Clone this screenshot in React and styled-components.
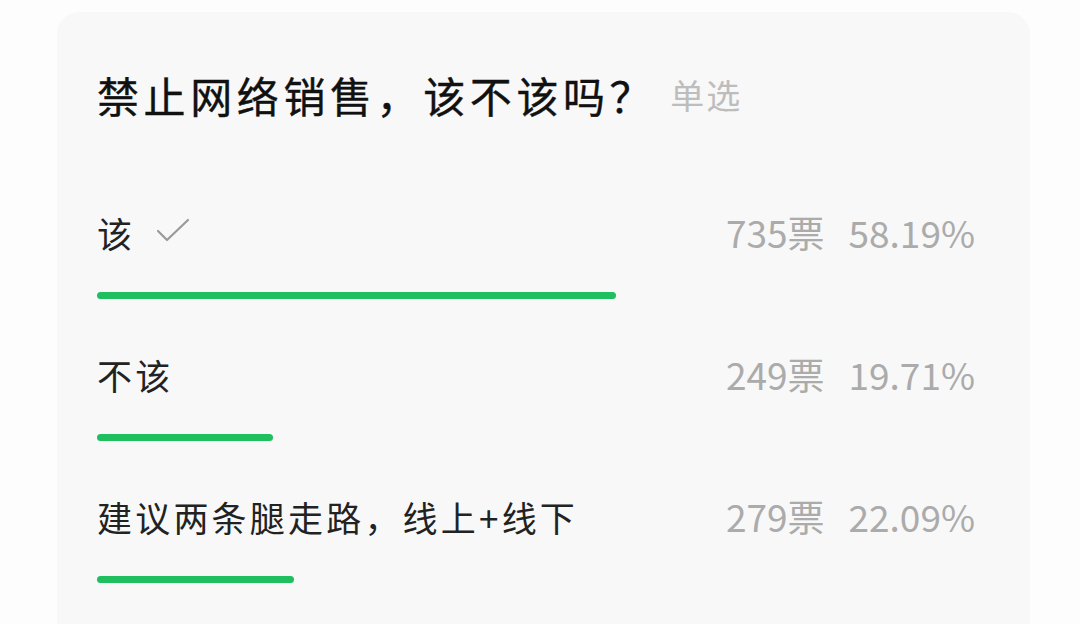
import React from 'react'
import styled, { createGlobalStyle } from 'styled-components'

const GlobalStyle = createGlobalStyle`
  html, body {
    margin: 0;
    padding: 0;
    background: #fdfdfd;
  }
  body {
    font-family: "Noto Sans CJK SC", "Noto Sans", sans-serif;
    overflow: hidden;
  }
`

const Page = styled.div`
  width: 1080px;
  height: 624px;
  padding-top: 12px;
  box-sizing: border-box;
  overflow: hidden;
`

const Card = styled.div`
  margin-left: 57px;
  width: 973px;
  min-height: 700px;
  box-sizing: border-box;
  padding: 51px 41px 0 40px;
  background: #f8f8f8;
  border-radius: 22px;
`

const TitleRow = styled.div`
  display: flex;
  align-items: center;
  height: 62px;
  margin-bottom: 81px;
`

const Title = styled.h1`
  margin: 0;
  font-size: 42px;
  font-weight: 400;
  letter-spacing: 4.6px;
  color: #111;
  -webkit-text-stroke: 0.4px #111;
`

const Kind = styled.span`
  margin-left: 14px;
  font-size: 34px;
  letter-spacing: 2px;
  color: #bdbdbd;
`

const Option = styled.div`
  margin-bottom: 49px;
`

const LabelRow = styled.div`
  display: flex;
  align-items: center;
  justify-content: space-between;
  height: 52px;
  padding-right: 14px;
`

const Label = styled.div`
  display: flex;
  align-items: center;
  font-size: 35px;
  letter-spacing: 3.2px;
  color: #222;
`

const Check = styled.svg`
  margin-left: 20px;
  width: 36px;
  height: 30px;
`

const Stats = styled.div`
  display: flex;
  gap: 24px;
  font-size: 37px;
  color: #ababab;
`

const Track = styled.div`
  margin-top: 34px;
  height: 7px;
`

const Bar = styled.div`
  height: 7px;
  border-radius: 4px;
  background: #1fbf5f;
`

const options = [
  { label: '该', votes: 735, pct: 58.19, chosen: true },
  { label: '不该', votes: 249, pct: 19.71 },
  { label: '建议两条腿走路，线上+线下', votes: 279, pct: 22.09 },
]

const App = () => (
  <Page>
    <GlobalStyle />
    <Card>
      <TitleRow>
        <Title>禁止网络销售，该不该吗？</Title>
        <Kind>单选</Kind>
      </TitleRow>
      {options.map(o => (
        <Option key={o.label}>
          <LabelRow>
            <Label>
              {o.label}
              {o.chosen && (
                <Check viewBox="0 0 36 30">
                  <polyline
                    points="3,14 12,23 33,3"
                    fill="none"
                    stroke="#9a9a9a"
                    strokeWidth="2.2"
                    strokeLinecap="round"
                    strokeLinejoin="round"
                  />
                </Check>
              )}
            </Label>
            <Stats>
              <span>{o.votes}票</span>
              <span>{o.pct.toFixed(2)}%</span>
            </Stats>
          </LabelRow>
          <Track>
            <Bar style={{ width: `${o.pct}%` }} />
          </Track>
        </Option>
      ))}
    </Card>
  </Page>
)

export default App
